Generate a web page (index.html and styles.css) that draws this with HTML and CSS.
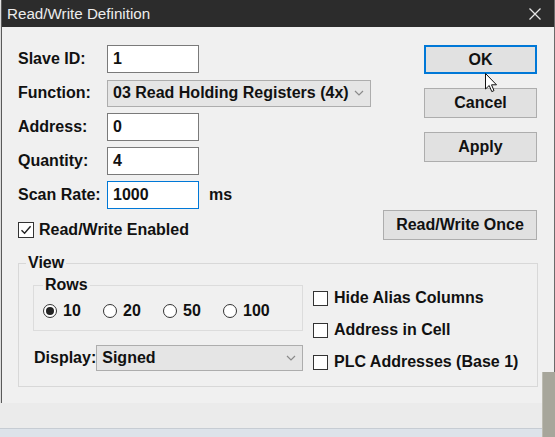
FILE: index.html
```html
<!DOCTYPE html>
<html>
<head>
<meta charset="utf-8">
<title>Read/Write Definition</title>
<link rel="stylesheet" href="styles.css">
</head>
<body>
<div class="screen">
  <div class="dialog">
    <div class="titlebar">
      <span class="title">Read/Write Definition</span>
      <svg class="close" width="14" height="14" viewBox="0 0 14 14"><path d="M1.5 1.5 L12.5 12.5 M12.5 1.5 L1.5 12.5" stroke="#e6e6e6" stroke-width="1.3" fill="none"/></svg>
    </div>
    <div class="body">
      <div class="top">
        <div class="form">
          <div class="row"><span class="lbl">Slave ID:</span><div class="input">1</div></div>
          <div class="row"><span class="lbl">Function:</span><div class="select sel-func"><span>03 Read Holding Registers (4x)</span><svg class="chev" width="10" height="6" viewBox="0 0 10 6"><path d="M1 1 L5 5 L9 1" stroke="#8a8a8a" stroke-width="1.2" fill="none"/></svg></div></div>
          <div class="row"><span class="lbl">Address:</span><div class="input">0</div></div>
          <div class="row"><span class="lbl">Quantity:</span><div class="input">4</div></div>
          <div class="row"><span class="lbl">Scan Rate:</span><div class="input focus">1000</div><span class="unit">ms</span></div>
          <div class="check-row enabled"><span class="cb big"><svg width="14" height="14" viewBox="0 0 14 14"><path d="M2.5 7.2 L5.6 10.3 L11.6 3.3" stroke="#222" stroke-width="1.4" fill="none"/></svg></span><span>Read/Write Enabled</span></div>
        </div>
        <div class="buttons">
          <div class="btn ok">OK</div>
          <div class="btn">Cancel</div>
          <div class="btn">Apply</div>
          <div class="btn once">Read/Write Once</div>
        </div>
      </div>
      <fieldset class="view">
        <legend>View</legend>
        <div class="view-inner">
          <div class="view-left">
            <fieldset class="rows">
              <legend>Rows</legend>
              <div class="radios">
                <div class="radio-item"><span class="radio on"></span><span>10</span></div>
                <div class="radio-item"><span class="radio"></span><span>20</span></div>
                <div class="radio-item"><span class="radio"></span><span>50</span></div>
                <div class="radio-item"><span class="radio"></span><span>100</span></div>
              </div>
            </fieldset>
            <div class="display-row"><span>Display:</span><div class="select sel-disp"><span>Signed</span><svg class="chev" width="10" height="6" viewBox="0 0 10 6"><path d="M1 1 L5 5 L9 1" stroke="#8a8a8a" stroke-width="1.2" fill="none"/></svg></div></div>
          </div>
          <div class="view-right">
            <div class="check-row"><span class="cb"></span><span>Hide Alias Columns</span></div>
            <div class="check-row"><span class="cb"></span><span>Address in Cell</span></div>
            <div class="check-row"><span class="cb"></span><span>PLC Addresses (Base 1)</span></div>
          </div>
        </div>
      </fieldset>
    </div>
  </div>
  <div class="below"></div>
  <div class="strip"></div>
  <div class="side-block"></div>
  <svg class="cursor" width="13" height="20" viewBox="0 0 13 20"><path d="M0.5 0.5 L0.5 16 L4.2 12.5 L6.8 18.6 L9 17.6 L6.5 11.8 L11.5 11.8 Z" fill="#fff" stroke="#111" stroke-width="1"/></svg>
</div>
</body>
</html>
```

FILE: styles.css
```css
* { box-sizing: border-box; }
html, body { margin: 0; padding: 0; }
body { background: #e9e9e9; }

.screen {
  position: relative;
  width: 555px;
  height: 437px;
  overflow: hidden;
  background: #e9e9e9;
  display: flex;
  flex-direction: column;
  font-family: "Liberation Sans", Arial, sans-serif;
  font-weight: bold;
  font-size: 16px;
  color: #111;
}

.dialog {
  width: 554px;
  height: 403px;
  margin-left: 1px;
  border-left: 1px solid #5a5a5a;
  border-right: 1px solid #6a6a6a;
  background: #f0f0f0;
  box-shadow: 0 3px 6px rgba(0,0,0,0.12);
  display: flex;
  flex-direction: column;
  flex: none;
}

.titlebar {
  height: 27px;
  background: #2c2c2c;
  display: flex;
  align-items: center;
  justify-content: space-between;
  padding: 0 12px 0 5px;
  flex: none;
}
.title {
  font-weight: normal;
  font-size: 15.2px;
  color: #ececec;
}
.close { display: block; margin-top: 1px; }

.body {
  padding: 18px 17px 0 16px;
  display: flex;
  flex-direction: column;
}

.top {
  display: flex;
  justify-content: space-between;
}

.form {
  display: flex;
  flex-direction: column;
}

.row {
  display: flex;
  align-items: center;
  height: 28px;
  margin-bottom: 6px;
}
.lbl { width: 89px; flex: none; }

.input {
  width: 92px;
  height: 28px;
  background: #fff;
  border: 1px solid #7a7a7a;
  padding-left: 5px;
  display: flex;
  align-items: center;
}
.input.focus { border-color: #0078d7; }
.unit { margin-left: 10px; }

.select {
  height: 27px;
  background: #e5e5e5;
  border: 1px solid #adadad;
  display: flex;
  align-items: center;
  justify-content: space-between;
  padding: 0 6px 0 5px;
}
.sel-func { width: 264px; }
.chev { display: block; flex: none; }

.check-row {
  display: flex;
  align-items: center;
  height: 20px;
}
.check-row.enabled { margin-top: 5px; }
.cb {
  width: 15px;
  height: 15px;
  border: 1px solid #333;
  background: #fff;
  margin-right: 6px;
  display: flex;
  align-items: center;
  justify-content: center;
  flex: none;
}
.cb.big { width: 16px; height: 16px; margin-right: 5px; }
.cb svg { display: block; }

.buttons {
  width: 154px;
  display: flex;
  flex-direction: column;
  align-items: flex-end;
  padding-top: 0;
}
.btn {
  width: 113px;
  height: 30px;
  background: #e1e1e1;
  border: 1px solid #adadad;
  display: flex;
  align-items: center;
  justify-content: center;
  margin-bottom: 14px;
}
.btn.ok {
  height: 29px;
  border: 2px solid #0078d7;
}
.btn.once {
  width: 154px;
  margin-top: 34px;
  margin-bottom: 0;
}

fieldset {
  margin: 0;
  min-width: 0;
}
legend {
  padding: 0 2px;
  line-height: 16px;
}

.view {
  margin-top: 15px;
  width: 520px;
  border: 1px solid #d8d8d8;
  padding: 6px 10px 14px 14px;
}
.view > legend { margin-left: -7px; }

.view-inner {
  display: flex;
}
.view-left {
  width: 270px;
  display: flex;
  flex-direction: column;
}

.rows {
  border: 1px solid #dcdcdc;
  padding: 9px 9px 10px 9px;
}

.radios { display: flex; height: 18px; }
.radio-item {
  width: 60px;
  display: flex;
  align-items: center;
}
.radio {
  width: 14px;
  height: 14px;
  border: 1px solid #333;
  border-radius: 50%;
  background: #fff;
  margin-right: 6px;
  display: flex;
  align-items: center;
  justify-content: center;
  flex: none;
}
.radio.on::after {
  content: "";
  width: 8px;
  height: 8px;
  border-radius: 50%;
  background: #222;
}

.display-row {
  display: flex;
  align-items: center;
  margin-top: 14px;
  padding-left: 1px;
}
.sel-disp {
  width: 207px;
  height: 26px;
  padding-right: 6px;
}

.view-right {
  margin-left: 10px;
  margin-top: 11px;
  display: flex;
  flex-direction: column;
  gap: 12px;
}

.below {
  flex: 1;
  background: #ebebeb;
}
.strip {
  height: 9px;
  flex: none;
  background: #dde3ea;
  border-top: 1px solid #c6ccd3;
}

.side-block {
  position: absolute;
  left: 542px;
  top: 372px;
  width: 13px;
  height: 65px;
  background: #a7a69b;
  border-left: 1px solid #bdbcb2;
}

.cursor {
  position: absolute;
  left: 485px;
  top: 73px;
}
```
